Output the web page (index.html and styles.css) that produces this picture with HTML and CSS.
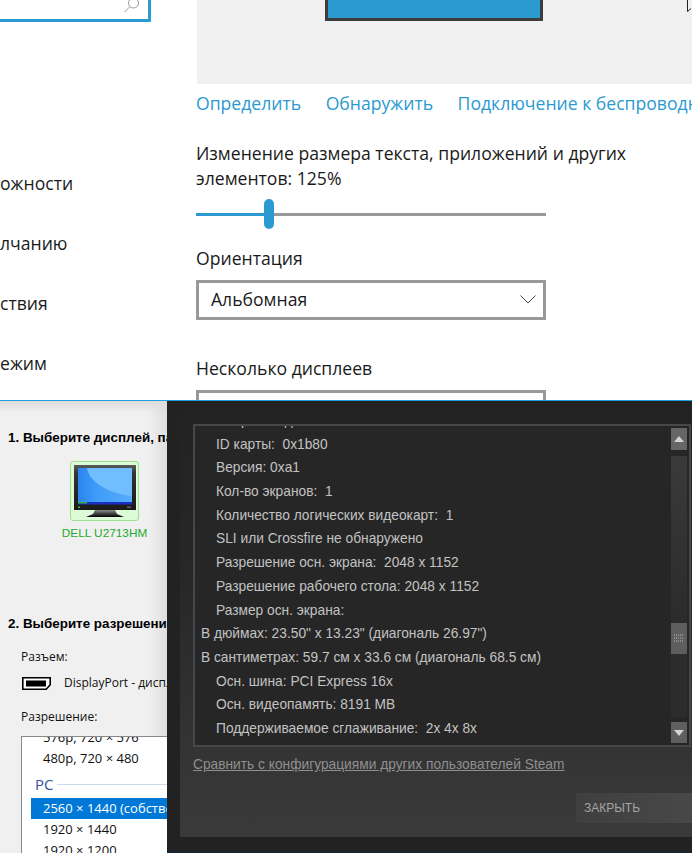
FILE: index.html
```html
<!DOCTYPE html>
<html lang="ru">
<head>
<meta charset="utf-8">
<title>Экран</title>
<link rel="stylesheet" href="styles.css">
</head>
<body>
<section class="settings">
  <aside class="nav">
    <div class="search">
      <svg class="search-icon" width="16" height="16" viewBox="0 0 16 16"><circle cx="9.500" cy="4" r="5" fill="none" stroke="#9a9a9a"/><path d="M6 7.500 0.500 13" stroke="#9a9a9a" fill="none"/></svg>
    </div>
    <ul class="nav-list">
      <li>ожности</li>
      <li>лчанию</li>
      <li>ствия</li>
      <li>ежим</li>
    </ul>
  </aside>
  <main class="display">
    <div class="preview">
      <div class="screen"></div>
      <svg class="cursor" width="5" height="12" viewBox="0 0 5 12"><path d="M.5 0v11.500L4 8.500" fill="none" stroke="#222"/></svg>
    </div>
    <div class="links"><a>Определить</a><a>Обнаружить</a><a>Подключение к беспроводному дисплею</a></div>
    <p class="scale-label">Изменение размера текста, приложений и других элементов: 125%</p>
    <div class="slider"><span class="slider-fill"></span><span class="slider-thumb"></span><span class="slider-rest"></span></div>
    <p class="field-label">Ориентация</p>
    <div class="select"><span>Альбомная</span>
      <svg width="16" height="9" viewBox="0 0 16 9"><path d="M.5.500l7.500 7.500 7.500-7.500" fill="none" stroke="#444"/></svg>
    </div>
    <p class="field-label multi">Несколько дисплеев</p>
    <div class="select"></div>
  </main>
</section>
<section class="lower">
  <aside class="nvidia">
    <h2>1. Выберите дисплей, параметры</h2>
    <div class="monitor">
      <div class="monitor-tile">
        <svg width="64" height="54" viewBox="0 0 64 54">
          <defs>
            <linearGradient id="scr" x1="0" y1="0" x2="1" y2="0"><stop offset="0" stop-color="#2a84f2"/><stop offset=".35" stop-color="#3f9cf8"/><stop offset="1" stop-color="#55adfb"/></linearGradient>
            <linearGradient id="bez" x1="0" y1="0" x2="0" y2="1"><stop offset="0" stop-color="#5a5a5a"/><stop offset=".2" stop-color="#333"/><stop offset="1" stop-color="#1a1a1a"/></linearGradient>
            <linearGradient id="foot" x1="0" y1="0" x2="0" y2="1"><stop offset="0" stop-color="#8a8a8a"/><stop offset="1" stop-color="#000"/></linearGradient>
          </defs>
          <rect x="1" y="1" width="62" height="45" fill="url(#bez)"/>
          <rect x="5" y="4" width="54" height="36" fill="#70befe"/>
          <path d="M5 4h9c2 12 16 24 45 28v6H5z" fill="url(#scr)"/>
          <rect x="5" y="38" width="54" height="2.500" fill="#1a30c4"/>
          <rect x="5" y="38" width="9" height="1.500" fill="#3ab53a"/>
          <rect x="5" y="42.500" width="2" height="1.500" fill="#2ecc2e"/>
          <rect x="54" y="42.500" width="4" height="1.500" fill="#666"/>
          <path d="M22 46h20l2 4 7 3H13l7-3z" fill="url(#foot)"/>
        </svg>
      </div>
      <span class="monitor-name">DELL U2713HM</span>
    </div>
    <h2 class="second">2. Выберите разрешение</h2>
    <div class="connector">
      <p>Разъем:</p>
      <div class="port">
        <svg width="29" height="13" viewBox="0 0 29 13"><path d="M.8.8h27.400v7l-4 4.400H.8z" fill="#fff" stroke="#000" stroke-width="1.600"/><rect x="4" y="3.500" width="20" height="6" fill="#000"/></svg>
        <span>DisplayPort - дисплей</span>
      </div>
      <p class="res-label">Разрешение:</p>
    </div>
    <div class="res-list">
      <div class="res-item cut">576p, 720 × 576</div>
      <div class="res-item">480p, 720 × 480</div>
      <div class="res-group"><span>PC</span><i></i></div>
      <div class="res-item active">2560 × 1440 (собственное)</div>
      <div class="res-item">1920 × 1440</div>
      <div class="res-item">1920 × 1200</div>
    </div>
  </aside>
  <div class="steam">
    <div class="steam-panel">
      <div class="info">
        <div class="info-scroll">
          <div class="line cut">ID производителя: 0x10de</div>
          <div class="line">ID карты:&nbsp; 0x1b80</div>
          <div class="line">Версия: 0xa1</div>
          <div class="line">Кол-во экранов:&nbsp; 1</div>
          <div class="line">Количество логических видеокарт:&nbsp; 1</div>
          <div class="line">SLI или Crossfire не обнаружено</div>
          <div class="line">Разрешение осн. экрана:&nbsp; 2048 x 1152</div>
          <div class="line">Разрешение рабочего стола: 2048 x 1152</div>
          <div class="line">Размер осн. экрана:</div>
          <div class="line out">В дюймах: 23.50" x 13.23" (диагональ 26.97")</div>
          <div class="line out">В сантиметрах: 59.7 см x 33.6 см (диагональ 68.5 см)</div>
          <div class="line">Осн. шина: PCI Express 16x</div>
          <div class="line">Осн. видеопамять: 8191 MB</div>
          <div class="line">Поддерживаемое сглаживание:&nbsp; 2x 4x 8x</div>
        </div>
        <div class="scrollbar">
          <div class="sb-btn"><svg width="10" height="6" viewBox="0 0 10 6"><path d="M5 0 10 6H0z" fill="#d4d4d4"/></svg></div>
          <div class="sb-track"><div class="sb-thumb"><svg width="10" height="10" viewBox="0 0 10 10"><path d="M0 1h10M0 4h10M0 7h10" stroke="#bbb" stroke-dasharray="1 1" fill="none"/></svg></div></div>
          <div class="sb-btn down"><svg width="10" height="6" viewBox="0 0 10 6"><path d="M0 0h10L5 6z" fill="#d4d4d4"/></svg></div>
        </div>
      </div>
      <a class="compare">Сравнить с конфигурациями других пользователей Steam</a>
      <div class="actions"><button class="close">ЗАКРЫТЬ</button></div>
    </div>
  </div>
</section>
</body>
</html>
```
FILE: styles.css
```css
* { box-sizing: border-box; }
html, body { margin: 0; padding: 0; }
body { width: 692px; height: 853px; overflow: hidden; background: #fff; font-family: "Open Sans", "Noto Sans", sans-serif; color: #1a1a1a; }
p, h2, ul { margin: 0; padding: 0; }

.settings { height: 400px; display: flex; overflow: hidden; background: #fff; }
.nav { width: 197px; flex: none; }
.search { width: 151px; height: 22px; border: 3px solid #2b9ad0; border-top: 0; border-left: 0; background: #fff; display: flex; justify-content: flex-end; }
.search-icon { margin: -1px 8px 0 0; }
.nav-list { list-style: none; margin-top: 149px; }
.nav-list li { height: 60px; font-size: 17.600px; line-height: 24px; white-space: nowrap; }

.display { flex: 1; min-width: 0; }
.preview { height: 84px; background: #f0f0f0; padding-left: 128px; position: relative; }
.screen { width: 218px; height: 21px; background: #2b9ad0; border: 3px solid #3c3c3c; border-top: 0; }
.cursor { position: absolute; top: 0; right: 0; }
.links { display: flex; gap: 24.500px; margin: 7px 0 0 -1px; height: 27px; font-size: 17.600px; line-height: 24px; color: #2b9ad0; white-space: nowrap; overflow: hidden; }
.links a { flex: none; }
.scale-label { width: 480px; margin: 23px 0 0 -1px; font-size: 17.600px; line-height: 25px; }
.slider { width: 350px; height: 30px; margin: 8px 0 0 -1px; display: flex; align-items: center; }
.slider-fill { width: 68px; height: 3px; background: #2b9ad0; }
.slider-thumb { width: 10px; height: 30px; border-radius: 5px; background: #2b9ad0; }
.slider-rest { flex: 1; height: 3px; background: #999; }
.field-label { margin: 17px 0 0 -1px; font-size: 17.600px; line-height: 24px; }
.select { width: 350px; height: 40px; margin: 10px 0 0 -1px; border: 3px solid #999; padding: 0 7px 2px 12px; display: flex; align-items: center; justify-content: space-between; font-size: 17.600px; background: #fff; }
.field-label.multi { margin-top: 36px; }

.lower { height: 453px; display: flex; border-top: 1px solid #1ea0dd; background: #f0f0f0; }
.nvidia { width: 167px; flex: none; overflow: hidden; background: linear-gradient(#dcdcdc, rgba(240,240,240,0) 12px), linear-gradient(90deg, rgba(240,240,240,0) 148px, #dedede), #f0f0f0; font-family: "Liberation Sans", sans-serif; color: #000; padding-top: 29px; white-space: nowrap; }
.nvidia h2 { font-size: 13.400px; line-height: 16px; font-weight: 700; padding-left: 8px; }
.monitor { width: 180px; padding: 15px 0 0 29px; display: flex; flex-direction: column; align-items: center; }
.monitor-tile { width: 69px; height: 60px; border: 1px solid #9fe090; border-radius: 3px; background: #dcfcd8; display: flex; align-items: center; justify-content: center; }
.monitor-name { margin-top: 5px; font-size: 11.800px; line-height: 15px; color: #1cac2c; }
.nvidia h2.second { margin-top: 75px; }
.connector { padding: 17px 0 0 21px; font-family: "Open Sans", sans-serif; font-size: 12px; line-height: 16px; color: #111; }
.port { display: flex; align-items: center; gap: 13px; margin: 10px 0 0 1px; height: 16px; }
.port svg { flex: none; }
.res-label { margin-top: 18px; }
.res-list { margin: 11px 0 0 21px; width: 300px; height: 170px; border: 1px solid #888; background: #fff; overflow: hidden; font-family: "Open Sans", sans-serif; font-size: 13px; color: #111; }
.res-item { height: 21px; line-height: 21px; padding-left: 21px; }
.res-item.cut { margin-top: -10px; }
.res-group { height: 28px; margin-top: 1px; display: flex; align-items: center; gap: 4px; padding-left: 13px; font-size: 15px; color: #33539c; }
.res-group i { flex: 1; height: 1px; background: #cfd9ee; }
.res-item.active { background: #0078d7; color: #fff; margin-left: 9px; padding-left: 12px; }

.steam { flex: 1; min-width: 0; background: #222; padding: 0 0 15px 13px; display: flex; border-bottom: 1px solid #0f2a40; }
.steam-panel { flex: 1; min-width: 0; background: linear-gradient(#222 0, #272727 40%, #3a3a3a 100%); padding: 23px 0 0 13px; font-family: "Liberation Sans", sans-serif; }
.info { height: 323px; width: 498px; display: flex; border: 2px solid #474747; background: #262626; overflow: hidden; }
.info-scroll { flex: 1; min-width: 0; overflow: hidden; padding-left: 21px; color: #c2c2c2; font-size: 13.750px; }
.line { height: 23.700px; line-height: 23.700px; white-space: nowrap; }
.line.cut { margin-top: -17px; }
.line.out { margin-left: -15px; }
.scrollbar { width: 16px; flex: none; margin: 2px 2px 2px 0; display: flex; flex-direction: column; }
.sb-btn { height: 22px; background: #666; display: flex; align-items: center; justify-content: center; }
.sb-btn.down { height: 21px; background: #5f5f5f; }
.sb-track { flex: 1; margin: 6px 0 5px; background: linear-gradient(#3a3a3a 0, #2c2c2c 60%); padding-top: 167px; }
.sb-thumb { height: 31px; background: #5e5e5e; display: flex; align-items: center; justify-content: center; }
.compare { display: block; margin-top: 10px; font-size: 13.750px; line-height: 16px; color: #8f8f8f; text-decoration: underline; white-space: nowrap; }
.actions { display: flex; justify-content: flex-end; margin-top: 20px; }
.close { width: 116px; height: 30px; border: 0; background: linear-gradient(90deg, #3f3f3f, #484848); color: #a4a4a4; font-family: "Liberation Sans", sans-serif; font-size: 12px; text-align: left; padding: 0 0 0 8px; }
```
